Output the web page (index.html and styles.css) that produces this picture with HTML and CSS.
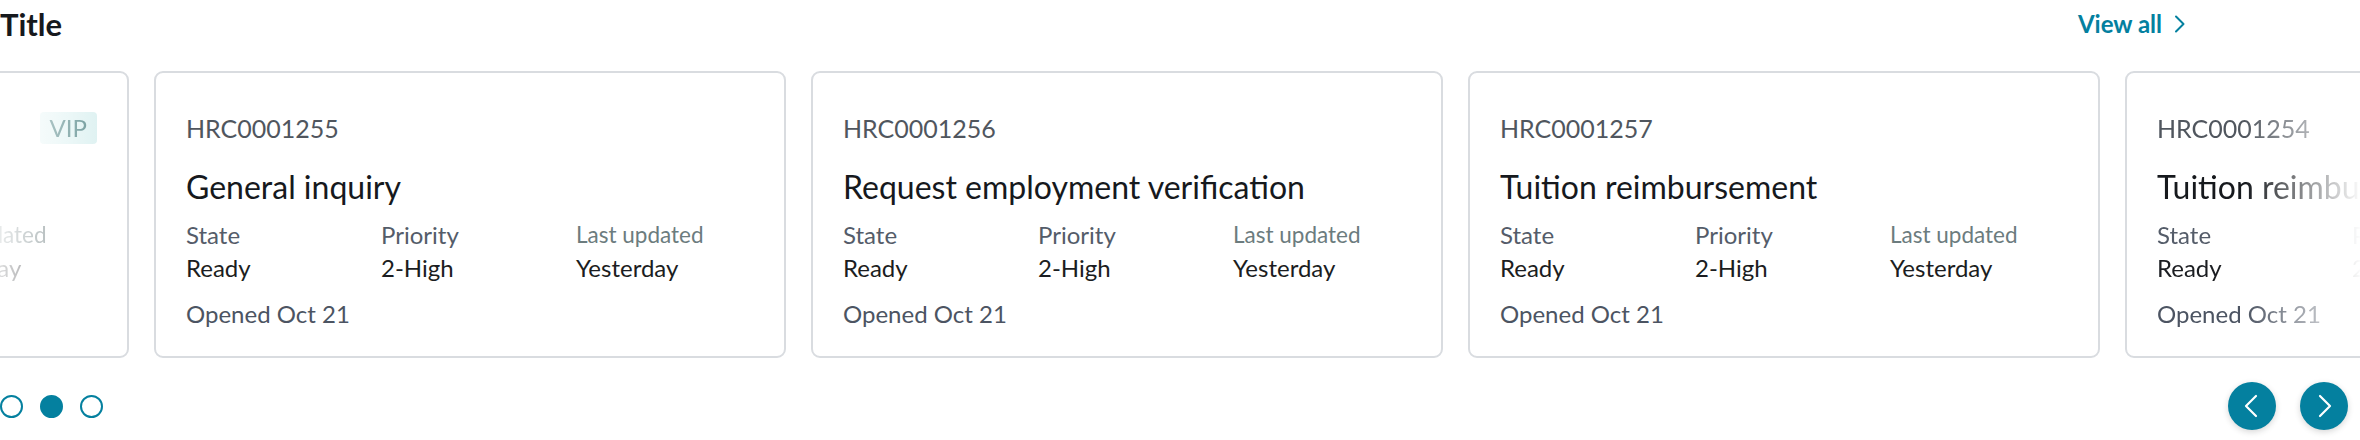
FILE: index.html
```html
<!DOCTYPE html>
<html lang="en">
<head>
<meta charset="utf-8">
<title>Cases carousel</title>
<link rel="stylesheet" href="styles.css">
</head>
<body>
<section class="carousel">
  <header class="carousel-header">
    <h2 class="carousel-title">Title</h2>
    <a class="view-all" href="#">View all
      <svg class="view-all-icon" viewBox="0 0 12 20" width="12" height="20" aria-hidden="true"><path d="M2 2.5 L9.5 10 L2 17.5" fill="none" stroke="currentColor" stroke-width="2" stroke-linecap="round" stroke-linejoin="round"/></svg>
    </a>
  </header>

  <div class="carousel-viewport">
    <div class="carousel-track">
      <article class="card card--peek-left">
        <div class="card-body">
          <div class="card-top">
            <span class="card-id">HRC0001253</span>
            <span class="badge">VIP</span>
          </div>
          <h3 class="card-title">Benefits enrollment</h3>
          <dl class="card-meta">
            <div class="meta-item"><dt class="meta-label">State</dt><dd class="meta-value">Ready</dd></div>
            <div class="meta-item"><dt class="meta-label">Priority</dt><dd class="meta-value">2-High</dd></div>
            <div class="meta-item"><dt class="meta-label meta-label--muted">Last updated</dt><dd class="meta-value">Yesterday</dd></div>
          </dl>
          <p class="card-opened">Opened Oct 21</p>
        </div>
      </article>

      <article class="card">
        <div class="card-body">
          <div class="card-top"><span class="card-id">HRC0001255</span></div>
          <h3 class="card-title">General inquiry</h3>
          <dl class="card-meta">
            <div class="meta-item"><dt class="meta-label">State</dt><dd class="meta-value">Ready</dd></div>
            <div class="meta-item"><dt class="meta-label">Priority</dt><dd class="meta-value">2-High</dd></div>
            <div class="meta-item"><dt class="meta-label meta-label--muted">Last updated</dt><dd class="meta-value">Yesterday</dd></div>
          </dl>
          <p class="card-opened">Opened Oct 21</p>
        </div>
      </article>

      <article class="card">
        <div class="card-body">
          <div class="card-top"><span class="card-id">HRC0001256</span></div>
          <h3 class="card-title">Request employment verification</h3>
          <dl class="card-meta">
            <div class="meta-item"><dt class="meta-label">State</dt><dd class="meta-value">Ready</dd></div>
            <div class="meta-item"><dt class="meta-label">Priority</dt><dd class="meta-value">2-High</dd></div>
            <div class="meta-item"><dt class="meta-label meta-label--muted">Last updated</dt><dd class="meta-value">Yesterday</dd></div>
          </dl>
          <p class="card-opened">Opened Oct 21</p>
        </div>
      </article>

      <article class="card">
        <div class="card-body">
          <div class="card-top"><span class="card-id">HRC0001257</span></div>
          <h3 class="card-title">Tuition reimbursement</h3>
          <dl class="card-meta">
            <div class="meta-item"><dt class="meta-label">State</dt><dd class="meta-value">Ready</dd></div>
            <div class="meta-item"><dt class="meta-label">Priority</dt><dd class="meta-value">2-High</dd></div>
            <div class="meta-item"><dt class="meta-label meta-label--muted">Last updated</dt><dd class="meta-value">Yesterday</dd></div>
          </dl>
          <p class="card-opened">Opened Oct 21</p>
        </div>
      </article>

      <article class="card card--peek-right">
        <div class="card-body">
          <div class="card-top"><span class="card-id">HRC0001254</span></div>
          <h3 class="card-title">Tuition reimbursement</h3>
          <dl class="card-meta">
            <div class="meta-item"><dt class="meta-label">State</dt><dd class="meta-value">Ready</dd></div>
            <div class="meta-item"><dt class="meta-label">Priority</dt><dd class="meta-value">2-High</dd></div>
            <div class="meta-item"><dt class="meta-label meta-label--muted">Last updated</dt><dd class="meta-value">Yesterday</dd></div>
          </dl>
          <p class="card-opened">Opened Oct 21</p>
        </div>
      </article>
    </div>
  </div>

  <div class="carousel-controls">
    <div class="dots">
      <span class="dot"></span>
      <span class="dot dot--active"></span>
      <span class="dot"></span>
    </div>
    <div class="nav-buttons">
      <button class="nav-btn" type="button" aria-label="Previous">
        <svg viewBox="0 0 48 48" width="48" height="48" aria-hidden="true"><path d="M28 14 L18 24 L28 34" fill="none" stroke="#fff" stroke-width="2.2" stroke-linecap="round" stroke-linejoin="round"/></svg>
      </button>
      <button class="nav-btn" type="button" aria-label="Next">
        <svg viewBox="0 0 48 48" width="48" height="48" aria-hidden="true"><path d="M20 14 L30 24 L20 34" fill="none" stroke="#fff" stroke-width="2.2" stroke-linecap="round" stroke-linejoin="round"/></svg>
      </button>
    </div>
  </div>
</section>
</body>
</html>
```

FILE: styles.css
```css
* {
  box-sizing: border-box;
}

html, body {
  margin: 0;
  padding: 0;
  background: #ffffff;
}

body {
  font-family: Lato, "Open Sans", "Liberation Sans", sans-serif;
  color: #1b1d21;
  width: 2360px;
  height: 440px;
  overflow: hidden;
}

.carousel {
  display: flex;
  flex-direction: column;
}

.carousel-header {
  height: 48px;
  display: flex;
  align-items: center;
  justify-content: space-between;
  padding-right: 174px;
}

.carousel-title {
  margin: 0;
  font-size: 31px;
  font-weight: 700;
  line-height: 40px;
  color: #16191d;
}

.view-all {
  display: flex;
  align-items: center;
  gap: 12px;
  font-size: 24px;
  font-weight: 700;
  line-height: 32px;
  color: #04809f;
  text-decoration: none;
}

.view-all-icon {
  display: block;
}

.carousel-viewport {
  margin-top: 23px;
  overflow: hidden;
}

.carousel-track {
  display: flex;
  gap: 25px;
  margin-left: -503px;
}

.card {
  flex: 0 0 632px;
  min-width: 0;
  height: 287px;
  border: 2px solid #d9dce0;
  border-radius: 9px;
  background: #fff;
  overflow: hidden;
}

.card-body {
  padding: 39px 30px 0;
}

.card--peek-left .card-body {
  -webkit-mask-image: linear-gradient(to right, transparent 478px, #000 625px);
  mask-image: linear-gradient(to right, transparent 478px, #000 625px);
}

.card--peek-right .card-body {
  -webkit-mask-image: linear-gradient(to right, #000 118px, transparent 235px);
  mask-image: linear-gradient(to right, #000 118px, transparent 235px);
}

.card-top {
  height: 32px;
  display: flex;
  align-items: center;
  justify-content: space-between;
}

.card-id {
  font-size: 25px;
  line-height: 32px;
  color: #50565e;
}

.badge {
  height: 32px;
  padding: 0 10px;
  border-radius: 4px;
  background: linear-gradient(to right, #e8f6f6, #d8efef);
  color: #4f8384;
  font-size: 24px;
  line-height: 32px;
}

.card-title {
  margin: 23px 0 0;
  font-size: 32px;
  font-weight: 400;
  line-height: 40px;
  color: #16191d;
  white-space: nowrap;
}

.card-meta {
  margin: 11px 0 0;
  display: grid;
  grid-template-columns: 195px 195px 1fr;
}

.meta-item {
  display: flex;
  flex-direction: column;
  min-width: 0;
}

.meta-label,
.meta-value {
  margin: 0;
  font-size: 24px;
  line-height: 33px;
  white-space: nowrap;
}

.meta-label {
  color: #545c69;
}

.meta-label--muted {
  font-size: 22.5px;
  color: #6c7c7e;
}

.meta-value {
  color: #1b1d21;
}

.card-opened {
  margin: 13px 0 0;
  font-size: 24px;
  line-height: 33px;
  color: #4c5462;
  white-space: nowrap;
}

.carousel-controls {
  margin-top: 24px;
  height: 48px;
  display: flex;
  align-items: center;
  justify-content: space-between;
  padding-right: 12px;
}

.dots {
  display: flex;
  gap: 17px;
}

.dot {
  width: 23px;
  height: 23px;
  border-radius: 50%;
  border: 2px solid #04809f;
  background: #fff;
}

.dot--active {
  background: #04809f;
}

.nav-buttons {
  display: flex;
  gap: 24px;
}

.nav-btn {
  width: 48px;
  height: 48px;
  padding: 0;
  border: none;
  border-radius: 50%;
  background: #04809f;
  box-shadow: 0 2px 6px rgba(0, 0, 0, 0.16);
  display: flex;
  align-items: center;
  justify-content: center;
  cursor: pointer;
}

.nav-btn svg {
  display: block;
}
```
